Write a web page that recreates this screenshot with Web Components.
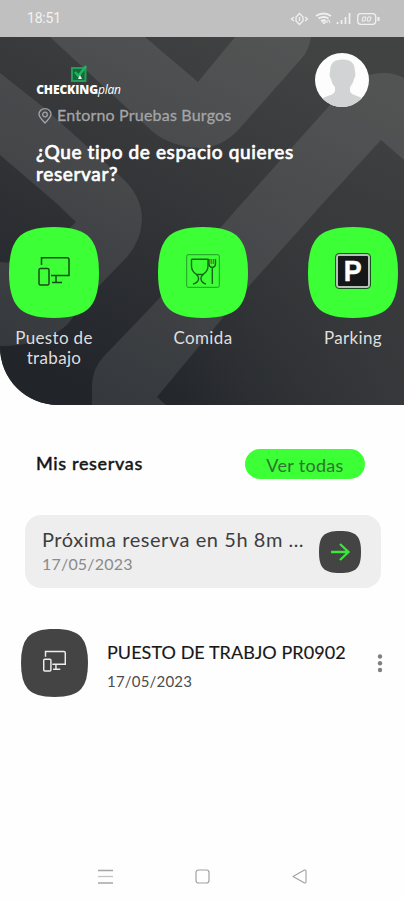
<!DOCTYPE html>
<html lang="es">
<head>
<meta charset="utf-8">
<title>CHECKINGplan</title>
<style>
html,body{margin:0;background:#fefefe}
body{width:404px;height:900px;overflow:hidden;font-family:Lato,"Noto Sans",sans-serif;font-variant-ligatures:none}
</style>
</head>
<body>
<reservas-app></reservas-app>
<script>
const define = (name, html) => customElements.define(name, class extends HTMLElement {
  connectedCallback() {
    if (this.shadowRoot) return;
    const t = document.createElement('template');
    t.innerHTML = html;
    this.attachShadow({mode: 'open'}).append(t.content.cloneNode(true));
  }
});

define('status-bar', `
<style>
:host{display:flex;justify-content:space-between;align-items:center;height:37px;box-sizing:border-box;padding:0 24px 0 27px;background:#c0c0c0;color:#f3f3f3;font:14px/37px Roboto,sans-serif}
span{letter-spacing:-.2px;font-size:14px}
svg{display:block}
</style>
<span>18:51</span>
<svg width="90" height="16" viewBox="290 11 90 16" fill="none" stroke="#f0f0f0" stroke-width="1.300">
<path d="M296 21V17l3.500-3.500L303 17v4l-3.500 3.500ZM299.500 17v4M294 17l-2.500 2 2.500 2M305 17l2.500 2-2.500 2"/>
<path d="M316 16q7.500-5 15 0M318.500 18.500q5-3 10 0M321 21q2.500-1.500 5 0" stroke-width="1.800"/><path d="M322 22l2 2 2-2zM327 23v-2l2-1 1 3" stroke-width="1"/>
<path d="M337.500 24v-2M341.500 24v-4M345.500 24v-7M349.500 24V13" stroke-width="1.700"/>
<rect x="357.700" y="13.700" width="18" height="10.600" rx="3"/><path d="M378.500 17v4" stroke-width="2"/><path d="M362 21l1-4h3l-1 4zM367 21l1-4h3l-1 4z" stroke-width="1"/>
</svg>`);

define('device-icon', `
<style>:host{display:block;width:32px;height:30px}svg{display:block;width:100%;height:100%}</style>
<svg viewBox="0 0 32 30" fill="none" stroke="currentColor" stroke-width="var(--line,1.5)">
<path d="M3.500 9V1.700H29Q31 1.700 31 3.700V19.500H13M18 20v6.500"/><path d="M14 26.500h10"/>
<rect x="1" y="12.500" width="10" height="16.500" rx="1.500"/>
</svg>`);

define('food-icon', `
<style>:host{display:block;width:34px;height:34px}svg{display:block}</style>
<svg width="34" height="34" viewBox="0 0 34 34" fill="none" stroke="#17651b" stroke-width="1.400">
<rect x=".7" y=".7" width="32.600" height="32.600" rx="1.500" stroke="#249d27" stroke-width="1"/>
<path d="M5.500 5.200H22V12Q22 17 17.500 20Q14.500 22.500 15 25.500Q16 29 20 30M5.500 5.200V12Q5.500 17 10 20Q13 22.500 12.500 25.500Q11.500 29 7 30M10 20.500h8"/>
<path d="M23 5v5q0 3 3.300 3.500V30M29.500 5v5q0 3-3.200 3.500" /><path d="M25.200 5v5M27.400 5v5" stroke="#7c6a20"/>
</svg>`);

define('parking-icon', `
<style>:host{display:flex;align-items:center;justify-content:center;box-sizing:border-box;width:34px;height:34px;border:2px solid #b9c0b9;border-radius:3px;outline:1px solid #174d1a;background:#161719;color:#fff;font:bold 29px/30px "Liberation Sans",sans-serif}
span{transform:scaleX(.93);-webkit-text-stroke:.4px #fff}</style>
<span>P</span>`);

define('space-tile', `
<style>
:host{display:flex;flex-direction:column;align-items:center;width:90px;color:#dededf;text-align:center}
.box{width:90px;height:91px;display:grid;place-items:center;color:#154d18}
.box svg{grid-area:1/1}
::slotted([slot=icon]){grid-area:1/1;margin-bottom:4px}
.name{margin-top:10px;font-size:17px;line-height:20px;letter-spacing:.35px}
</style>
<div class="box"><svg width="90" height="91" viewBox="0 0 90 91"><path fill="#3dff36" d="M45 0C63 0 74 3.500 81 11Q90 21 90 45.500T81 80C74 87.500 63 91 45 91S16 87.500 9 80Q0 70 0 45.500T9 11C16 3.500 27 0 45 0Z"/></svg><slot name="icon"></slot></div>
<div class="name"><slot></slot></div>`);

define('brand-logo', `
<style>
:host{display:flex;flex-direction:column;align-items:center;width:85px;color:#fff}
div{font:bold 12px/14px "Open Sans","Noto Sans",sans-serif;letter-spacing:-.12px;white-space:nowrap}
b{letter-spacing:-.12px}
i{font-weight:400;letter-spacing:-.2px}
svg{display:block}
</style>
<svg width="18" height="18" viewBox="0 0 18 18"><rect x="2" y="3" width="13.500" height="13" fill="#126b3b" stroke="#20a057" stroke-width="2"/><path d="M5 7l3.500 4L16 1" fill="none" stroke="#22b260" stroke-width="2.600"/><path d="M8 14l2-4 2 4z" fill="#eee"/></svg>
<div><b>CHECKING</b><i>plan</i></div>`);

define('user-avatar', `
<style>:host{display:block;width:54px;height:54px}svg{display:block}</style>
<svg width="54" height="54" viewBox="0 0 54 54"><defs><clipPath id="c"><circle cx="27" cy="27" r="27"/></clipPath></defs>
<circle cx="27" cy="27" r="27" fill="#fdfdfd"/>
<path clip-path="url(#c)" fill="#d2d3d4" d="M27.500 6.500C36 6.500 40 10 40 19c1 2 0 6-1 7-1 4-2.500 6-4 8v4c1 4 6 4 12 7v9H8v-9c6-3 11-3 12-7v-4c-2-2-3-4-4-8-1-1-2-5-1-7C15 10 19 6.500 27.500 6.500Z"/></svg>`);

define('hero-panel', `
<style>
:host{display:block;position:relative;height:368px;overflow:hidden;border-radius:0 0 0 58px;background:#292c30}
.bg{position:absolute;inset:0}
.content{position:relative}
.top{display:flex;justify-content:space-between;padding:16px 35px 0 36px;height:66px;box-sizing:border-box}
brand-logo{margin-top:12px}
.place{display:flex;align-items:center;gap:5px;margin:3px 0 0 38px;height:20px;color:#a4a5a6;font-size:16px;line-height:20px;letter-spacing:.2px;-webkit-text-stroke:.3px #a4a5a6}
.place span{position:relative;top:-1px}
h1{margin:15px 0 0 36px;color:#fff;font-size:19px;font-weight:500;line-height:22px;letter-spacing:.62px;-webkit-text-stroke:.6px #fff}
.tiles{display:flex;justify-content:space-between;padding:0 6px 0 9px;margin-top:42px}
space-tile:nth-child(2){margin-right:1px}
</style>
<svg class="bg" width="404" height="368" viewBox="0 37 404 368">
<defs><linearGradient id="g" gradientUnits="userSpaceOnUse" x1="290" y1="37" x2="110" y2="405"><stop offset="0" stop-color="#414343"/><stop offset=".5" stop-color="#333538"/><stop offset="1" stop-color="#212429"/></linearGradient>
<linearGradient id="r" x1="0" x2="1"><stop offset=".45" stop-color="#393b3d" stop-opacity="0"/><stop offset="1" stop-color="#393b3d" stop-opacity=".75"/></linearGradient></defs>
<path fill="url(#g)" d="M0 37h404v368H0z"/><path fill="url(#r)" d="M0 200h404v205H0z"/>
<g fill="#fff" fill-opacity=".095">
<path d="M50 37H145L198 82 235 37H311Q309 50 302 58L240 128Q222 148 200 148Q172 147 153 132Z"/>
<path fill-rule="evenodd" d="M0 73L42 106 120 176Q142 195 142 220Q141 242 125 259L97 288 67 325Q43 346 0 346V262Q30 266 47 250L76 222 55 202 0 155Z"/>
<path d="M330 105Q355 73 383 73Q395 73 404 78V160L381 140 325 201 250 285 157 397 166 405H92V387Q92 367 107 353L155 303 235 211Z"/>
</g>
</svg>
<div class="content">
<div class="top"><brand-logo></brand-logo><user-avatar></user-avatar></div>
<div class="place"><svg width="14" height="16" viewBox="0 0 14 16" fill="none" stroke="#a4a5a6" stroke-width="1.300"><path d="M7 15C3 11 1 9 1 6.300a6 5.600 0 0 1 12 0C13 9 11 11 7 15Z"/><circle cx="7" cy="6.500" r="2.300"/></svg><span>Entorno Pruebas Burgos</span></div>
<h1>¿Que tipo de espacio quieres<br>reservar?</h1>
<div class="tiles">
<space-tile><device-icon slot="icon"></device-icon>Puesto de<br>trabajo</space-tile>
<space-tile><food-icon slot="icon"></food-icon>Comida</space-tile>
<space-tile><parking-icon slot="icon"></parking-icon>Parking</space-tile>
</div></div>`);

define('section-head', `
<style>
:host{display:flex;justify-content:space-between;align-items:center;margin-top:44px;height:30px;padding:0 39px 0 36px}
h2{margin:0;padding-bottom:2px;font-size:18px;font-weight:500;line-height:28px;letter-spacing:.65px;color:#161616;-webkit-text-stroke:.4px #161616}
button{border:0;padding:2px 0 0;width:120px;height:30px;border-radius:15px;background:#3dff36;color:#307333;font:18px/28px Lato,sans-serif}
button span{letter-spacing:.3px}
</style>
<h2>Mis reservas</h2><button><span>Ver todas</span></button>`);

define('next-booking', `
<style>
:host{display:flex;align-items:center;justify-content:space-between;box-sizing:border-box;width:356px;height:73px;margin:36px 0 0 25px;padding:0 20px 0 17px;border-radius:16px;background:#eee}
.t{font-size:20px;line-height:26px;color:#3e3e3e;letter-spacing:.55px;white-space:nowrap}
.d{font-size:16px;line-height:24px;color:#8a8a8a;letter-spacing:.2px}
svg{display:block}
div div:first-child{margin-top:-1px}
</style>
<div><div class="t">Próxima reserva en 5h 8m …</div><div class="d">17/05/2023</div></div>
<svg width="42" height="42" viewBox="0 0 42 42"><path fill="#444" d="M21 0C37 0 42 5 42 21S37 42 21 42 0 37 0 21 5 0 21 0Z"/><path d="M12 21H29M21 13l8.500 8-8.500 8" fill="none" stroke="#3be738" stroke-width="2.300"/></svg>`);

define('booking-row', `
<style>
:host{display:flex;align-items:center;margin:41px 0 0 21px;padding-right:21px;height:68px}
.box{display:grid;place-items:center;width:67px;height:68px;color:#eee}
.box>*{grid-area:1/1}
.box device-icon{width:23px;height:22px;margin-bottom:4px;--line:2}
.txt{margin:5px 0 0 19px;flex:1}
.t{font-size:18px;line-height:26px;color:#171717;white-space:nowrap;letter-spacing:.05px;-webkit-text-stroke:.15px #171717}
.d{font-size:15px;line-height:22px;margin-top:5px;color:#4c4c4c;letter-spacing:.2px}
.menu{width:6px}
</style>
<div class="box"><svg width="67" height="68" viewBox="0 0 90 91" preserveAspectRatio="none"><path fill="#444" d="M45 0C63 0 74 3.500 81 11Q90 21 90 45.500T81 80C74 87.500 63 91 45 91S16 87.500 9 80Q0 70 0 45.500T9 11C16 3.500 27 0 45 0Z"/></svg><device-icon></device-icon></div>
<div class="txt"><div class="t">PUESTO DE TRABJO PR0902</div><div class="d">17/05/2023</div></div>
<svg class="menu" width="6" height="20" viewBox="0 0 6 20" fill="#808080"><circle cx="3" cy="3.500" r="2.200"/><circle cx="3" cy="10.300" r="2.200"/><circle cx="3" cy="17" r="2.200"/></svg>`);

define('nav-bar', `
<style>:host{display:flex;justify-content:space-between;align-items:center;margin-top:auto;height:48px;padding:0 97px 0 98px}svg{display:block}</style>
<svg width="15" height="15" viewBox="0 0 15 15" stroke="#a5a5a5" stroke-width="1.300"><path d="M0 1.500h15M0 14h15"/><path d="M0 7.500h15" stroke="#c4c4c4"/></svg>
<svg width="15" height="15" viewBox="0 0 15 15" fill="none" stroke="#a0a0a0" stroke-width="1.200"><rect x="1" y="1" width="13" height="13" rx="2.500"/></svg>
<svg width="15" height="15" viewBox="0 0 15 15" fill="none" stroke="#a0a0a0" stroke-width="1.100" stroke-linejoin="round"><path d="M1 7.500L12.500 1Q14 .8 14 2V13Q14 14.200 12.500 14Z"/></svg>`);

define('reservas-app', `
<style>:host{display:flex;flex-direction:column;width:404px;height:900px;overflow:hidden;background:#fefefe}</style>
<status-bar></status-bar><hero-panel></hero-panel><section-head></section-head><next-booking></next-booking><booking-row></booking-row><nav-bar></nav-bar>`);
</script>
</body>
</html>
